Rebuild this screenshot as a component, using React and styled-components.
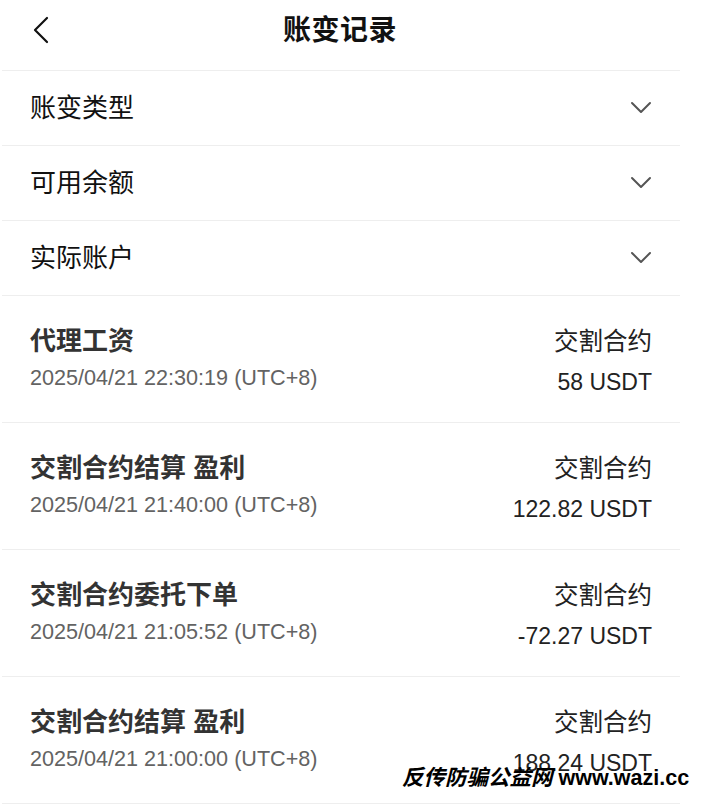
import React from "react";
import styled, { createGlobalStyle } from "styled-components";

const Global = createGlobalStyle`
  html, body { margin: 0; padding: 0; background: #fff; }
  body { font-family: "Liberation Sans", "Noto Sans CJK SC", sans-serif; -webkit-font-smoothing: antialiased; }
`;

const Page = styled.div`
  position: relative;
  width: 704px;
  height: 805px;
  overflow: hidden;
  background: #fff;
`;

const Header = styled.header`
  width: 680px;
  height: 70px;
  display: flex;
  align-items: center;
  justify-content: center;
  position: relative;
`;

const BackButton = styled.div`
  position: absolute;
  left: 32px;
  top: 16px;
  width: 20px;
  height: 28px;
  display: flex;
`;

const Title = styled.h1`
  margin: 0;
  font-size: 28px;
  font-weight: 700;
  color: #111;
  letter-spacing: 0.5px;
  padding-bottom: 14px;
`;

const List = styled.div`
  width: 678px;
  margin-left: 2px;
  display: flex;
  flex-direction: column;
`;

const FilterRow = styled.div`
  height: 74px;
  border-top: 1px solid #eeeeee;
  display: flex;
  align-items: center;
  justify-content: space-between;
  padding: 0 28px 0 28px;
  box-sizing: content-box;
`;

const FilterLabel = styled.span`
  font-size: 26px;
  color: #111;
  line-height: 30px;
`;

const RecordRow = styled.div`
  border-top: 1px solid #eeeeee;
  display: flex;
  justify-content: space-between;
  padding: 30px 28px 30px 28px;
  height: 66px;
  box-sizing: content-box;
  &:last-child { border-bottom: 1px solid #eeeeee; }
`;

const Col = styled.div`
  display: flex;
  flex-direction: column;
  align-items: ${(p) => (p.$right ? "flex-end" : "flex-start")};
  gap: ${(p) => (p.$right ? "10px" : "8px")};
`;

const RecordTitle = styled.span`
  font-size: 26px;
  font-weight: 700;
  line-height: 30px;
  color: #333;
`;

const DateText = styled.span`
  font-size: 21.6px;
  line-height: 28px;
  color: #636363;
`;

const Category = styled.span`
  font-size: 24.5px;
  line-height: 30px;
  color: #222;
  margin-top: 1px;
`;

const Amount = styled.span`
  font-size: 23px;
  line-height: 30px;
  color: #222;
`;

const Watermark = styled.div`
  position: absolute;
  left: 402px;
  top: 764px;
  font-size: 21.5px;
  font-weight: 700;
  color: #000;
  white-space: nowrap;
  line-height: 28px;
  & > em { font-style: italic; }
`;

const Back = () => (
  <svg width="20" height="28" viewBox="0 0 20 28">
    <polyline points="15,2 3,14 15,26" fill="none" stroke="#111" strokeWidth="2.2" strokeLinecap="round" strokeLinejoin="round" />
  </svg>
);

const Chevron = () => (
  <svg width="22" height="14" viewBox="0 0 22 14">
    <polyline points="2,2 11,11 20,2" fill="none" stroke="#555" strokeWidth="2" strokeLinecap="round" strokeLinejoin="round" />
  </svg>
);

const filters = ["账变类型", "可用余额", "实际账户"];

const records = [
  { title: "代理工资", date: "2025/04/21 22:30:19 (UTC+8)", amount: "58 USDT" },
  { title: "交割合约结算 盈利", date: "2025/04/21 21:40:00 (UTC+8)", amount: "122.82 USDT" },
  { title: "交割合约委托下单", date: "2025/04/21 21:05:52 (UTC+8)", amount: "-72.27 USDT" },
  { title: "交割合约结算 盈利", date: "2025/04/21 21:00:00 (UTC+8)", amount: "188.24 USDT" },
];

export default function App() {
  return (
    <Page>
      <Global />
      <Header>
        <BackButton><Back /></BackButton>
        <Title>账变记录</Title>
      </Header>
      <List>
        {filters.map((f) => (
          <FilterRow key={f}>
            <FilterLabel>{f}</FilterLabel>
            <Chevron />
          </FilterRow>
        ))}
        {records.map((r, i) => (
          <RecordRow key={i}>
            <Col>
              <RecordTitle>{r.title}</RecordTitle>
              <DateText>{r.date}</DateText>
            </Col>
            <Col $right>
              <Category>交割合约</Category>
              <Amount>{r.amount}</Amount>
            </Col>
          </RecordRow>
        ))}
      </List>
      <Watermark><em>反传防骗公益网</em> www.wazi.cc</Watermark>
    </Page>
  );
}
